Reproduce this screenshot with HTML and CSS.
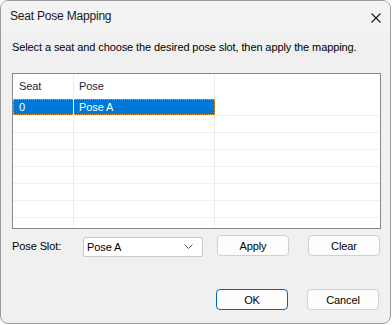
FILE: index.html
```html
<!DOCTYPE html>
<html lang="en">
<head>
    <meta charset="UTF-8">
    <title>Seat Pose Mapping</title>
    <link rel="stylesheet" href="styles.css">
</head>
<body>
    <div class="window">
        <div class="titlebar">
            <span class="title">Seat Pose Mapping</span>
            <svg class="close" width="10" height="10" viewBox="0 0 10 10">
                <path d="M0.5 0.5 L9.5 9.5 M9.5 0.5 L0.5 9.5" stroke="#1a1a1a" stroke-width="1.1" fill="none"/>
            </svg>
        </div>

        <div class="content">
            <p class="hint">Select a seat and choose the desired pose slot, then apply the mapping.</p>

            <div class="list">
                <div class="row header">
                    <div class="cell c1">Seat</div>
                    <div class="cell c2">Pose</div>
                    <div class="cell c3"></div>
                </div>
                <div class="row selected">
                    <div class="sel"><div class="cell c1">0</div><div class="cell c2">Pose A</div></div>
                    <div class="cell c3"></div>
                </div>
                <div class="row"><div class="cell c1"></div><div class="cell c2"></div><div class="cell c3"></div></div>
                <div class="row"><div class="cell c1"></div><div class="cell c2"></div><div class="cell c3"></div></div>
                <div class="row"><div class="cell c1"></div><div class="cell c2"></div><div class="cell c3"></div></div>
                <div class="row"><div class="cell c1"></div><div class="cell c2"></div><div class="cell c3"></div></div>
                <div class="row"><div class="cell c1"></div><div class="cell c2"></div><div class="cell c3"></div></div>
                <div class="row"><div class="cell c1"></div><div class="cell c2"></div><div class="cell c3"></div></div>
                <div class="row"><div class="cell c1"></div><div class="cell c2"></div><div class="cell c3"></div></div>
            </div>

            <div class="controls">
                <label class="slot-label">Pose Slot:</label>
                <div class="combo">
                    <span>Pose A</span>
                    <svg width="9" height="5" viewBox="0 0 9 5">
                        <path d="M0.5 0.5 L4.5 4.5 L8.5 0.5" stroke="#555" stroke-width="1" fill="none"/>
                    </svg>
                </div>
                <button class="btn">Apply</button>
                <button class="btn">Clear</button>
            </div>

            <div class="footer">
                <button class="btn default">OK</button>
                <button class="btn">Cancel</button>
            </div>
        </div>
    </div>
</body>
</html>
```

FILE: styles.css
```css
* {
    margin: 0;
    padding: 0;
    box-sizing: border-box;
}

body {
    background: #ffffff;
    font-family: 'Liberation Sans', Arial, sans-serif;
    font-size: 11px;
    letter-spacing: -0.1px;
    color: #000;
}

.window {
    width: 391px;
    height: 324px;
    border: 1px solid #9c9c9c;
    border-radius: 8px;
    background: #f0f0f0;
    overflow: hidden;
    display: flex;
    flex-direction: column;
}

.titlebar {
    height: 30px;
    background: #f3f3f3;
    display: flex;
    align-items: center;
    justify-content: space-between;
    padding: 0 9px 0 9px;
}

.title {
    font-size: 12px;
    letter-spacing: -0.2px;
    color: #1a1a1a;
}

.close {
    margin-top: 3px;
}

.content {
    padding: 0 10px 0 11px;
}

.hint {
    margin-top: 8px;
    line-height: 16px;
    height: 16px;
    white-space: nowrap;
}

.list {
    margin-top: 18px;
    width: 369px;
    height: 156px;
    border: 1px solid #828790;
    background: #fff;
    overflow: hidden;
}

.row {
    display: flex;
    height: 17px;
    border-bottom: 1px solid #efefef;
}

.row.header {
    height: 25px;
    border-bottom: none;
    color: #1e1e3c;
}

.cell {
    border-right: 1px solid #ececec;
    padding-left: 5px;
    line-height: 16px;
    white-space: nowrap;
}

.header .cell {
    line-height: 24px;
}

.c1 {
    width: 61px;
    padding-left: 6px;
}

.c2 {
    width: 141px;
}

.c3 {
    flex: 1;
    border-right: none;
}

.sel {
    display: flex;
    background: #0078d7;
    color: #fff;
    outline: 1px dotted #f0a040;
    outline-offset: -1px;
}

.sel .cell {
    border-right-color: #f6f6f6;
}

.sel .c2 {
    border-right-color: #0078d7;
}

.controls {
    margin-top: 6px;
    display: flex;
    align-items: center;
    height: 21px;
}

.slot-label {
    width: 71px;
}

.combo {
    width: 120px;
    height: 20px;
    margin-top: 2px;
    border: 1px solid #c8c8c8;
    border-radius: 2px;
    background: #fff;
    display: flex;
    align-items: center;
    justify-content: space-between;
    padding: 0 9px 0 3px;
}

.btn {
    width: 72px;
    height: 21px;
    border: 1px solid #d0d0d0;
    border-radius: 4px;
    background: #fdfdfd;
    font-family: inherit;
    font-size: 11px;
    letter-spacing: -0.1px;
    color: #000;
}

.controls .btn {
    margin-left: 14px;
}

.controls .btn + .btn {
    margin-left: 19px;
}

.footer {
    margin-top: 33px;
    display: flex;
    justify-content: flex-end;
    gap: 19px;
    padding-right: 1px;
}

.btn.default {
    border-color: #0067c0;
}
```
